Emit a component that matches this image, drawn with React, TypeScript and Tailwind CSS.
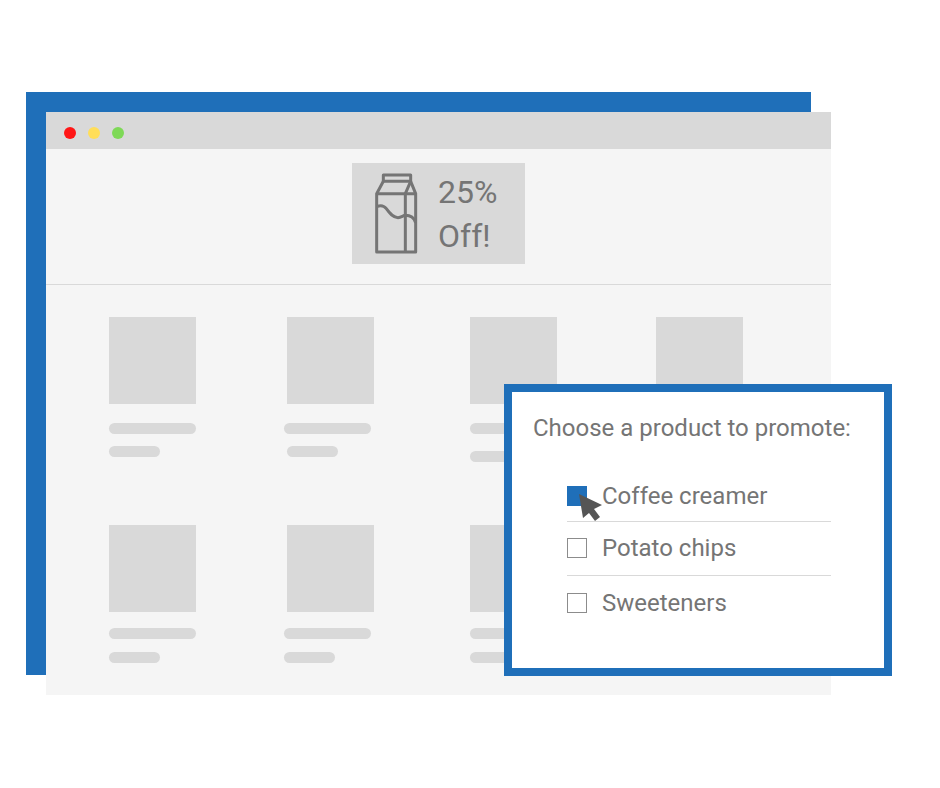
const lineClass = "h-[11px] rounded-full bg-[#d9d9d9]";

type ProductProps = {
  wide?: string;
  short?: string;
};

function Product({ wide = "mt-[19px]", short = "mt-[12px]" }: ProductProps) {
  return (
    <div className="flex h-[145px] w-[87px] flex-col">
      <div className="h-[87px] w-[87px] bg-[#d9d9d9]" />
      <div className={`w-[87px] ${lineClass} ${wide}`} />
      <div className={`w-[51px] ${lineClass} ${short}`} />
    </div>
  );
}

function MilkIcon() {
  return (
    <svg width="45" height="83.33" viewBox="0 0 135 250" fill="none" stroke="#757575" strokeWidth="9" strokeLinejoin="round">
      <rect x="31" y="9" width="82" height="19" />
      <path d="M31 28 L11 65 V240 H128 V65 L113 28" />
      <path d="M11 65 H128" />
      <path d="M113 28 L97 65 V240" />
      <path d="M11 104 C20 100 32 100 40 110 C50 124 60 137 75 137 C85 137 90 130 97 130 C110 130 122 134 128 152" />
    </svg>
  );
}

function Option({ label, checked, divider, rowClass }: { label: string; checked?: boolean; divider?: boolean; rowClass: string }) {
  return (
    <div className={`flex items-center gap-[15px] ${rowClass} ${divider ? "border-b border-[#d9d9d9]" : ""}`}>
      <div className={`h-[20px] w-[20px] ${checked ? "bg-[#1f6fb9]" : "border border-[#8c8c8c] bg-white"}`} />
      <span className="text-[24px] text-[#757575]">{label}</span>
    </div>
  );
}

export default function App() {
  return (
    <div className="h-[788px] w-[940px] bg-white pl-[46px] pt-[112px] font-['Roboto',sans-serif]">
      <div className="relative h-[583px] w-[785px]">
        <div className="absolute -left-[20px] -top-[20px] h-[583px] w-[785px] bg-[#1f6fb9]" />

        <div className="relative h-full bg-[#f5f5f5]">
          <div className="flex h-[37px] items-center gap-[12px] bg-[#d9d9d9] pl-[18px] pt-[4px]">
            <div className="h-[12px] w-[12px] rounded-full bg-[#ff1616]" />
            <div className="h-[12px] w-[12px] rounded-full bg-[#ffde59]" />
            <div className="h-[12px] w-[12px] rounded-full bg-[#7ed957]" />
          </div>

          <div className="flex h-[136px] justify-center border-b border-[#d9d9d9] pt-[14px]">
            <div className="flex h-[101px] w-[173px] items-center gap-[20px] bg-[#d9d9d9] pl-[21px]">
              <MilkIcon />
              <div className="text-[32px] leading-[44px] text-[#757575]">
                <div>25%</div>
                <div>Off!</div>
              </div>
            </div>
          </div>

          <div className="grid grid-cols-[178px_183px_186px_87px] pl-[63px] pt-[32px]">
            <Product />
            <Product wide="mt-[19px] -ml-[3px]" />
            <Product short="mt-[17px]" />
            <Product />
          </div>
          <div className="grid grid-cols-[178px_183px_186px_87px] pl-[63px] pt-[63px]">
            <Product wide="mt-[16px]" short="mt-[13px]" />
            <Product wide="mt-[16px] -ml-[3px]" short="mt-[13px] -ml-[3px]" />
            <Product wide="mt-[16px]" short="mt-[13px]" />
          </div>
        </div>
      </div>

      <div className="absolute left-[504px] top-[384px] h-[292px] w-[388px] border-[8px] border-[#1f6fb9] bg-white pl-[21px] pt-[21px]">
        <div className="text-[24px] leading-[30px] text-[#757575]">Choose a product to promote:</div>
        <div className="ml-[34px] mt-[26px] w-[264px]">
          <Option label="Coffee creamer" checked divider rowClass="h-[53px] pt-[2px]" />
          <Option label="Potato chips" divider rowClass="h-[54px] pb-[1px]" />
          <Option label="Sweeteners" rowClass="h-[54px]" />
        </div>
      </div>

      <svg className="absolute left-[575px] top-[490px]" width="32" height="34" viewBox="0 0 32 34">
        <path d="M4 4 L27 15 L19 19 L25 27 L20 31 L14 23 L8 28 Z" fill="#555555" />
      </svg>
    </div>
  );
}
